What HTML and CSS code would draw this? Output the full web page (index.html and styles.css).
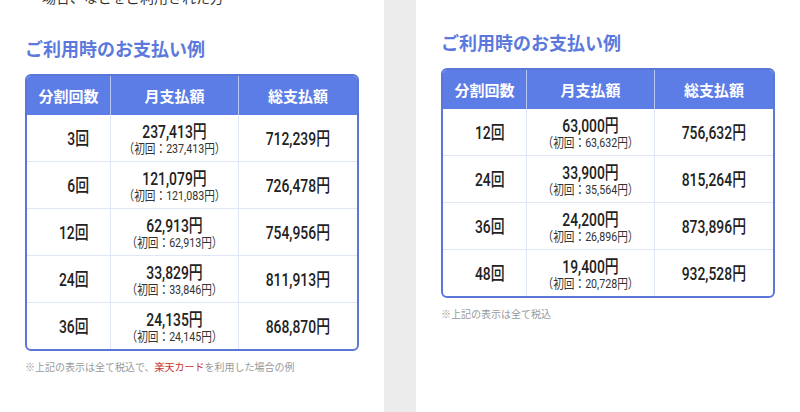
FILE: index.html
```html
<!DOCTYPE html>
<html lang="ja">
<head>
<meta charset="utf-8">
<link rel="stylesheet" href="styles.css">
</head>
<body>
<div class="page">
  <section class="panel panel-left">
    <p class="lead">場合、などをご利用された方</p>
    <h2 class="title">ご利用時のお支払い例</h2>
    <table class="pay">
      <thead>
        <tr><th>分割回数</th><th>月支払額</th><th>総支払額</th></tr>
      </thead>
      <tbody>
        <tr><td class="cnt"><span class="big r">3回</span></td><td class="mon"><span class="big">237,413円</span><span class="sub">（初回：237,413円）</span></td><td class="tot"><span class="big">712,239円</span></td></tr>
        <tr><td class="cnt"><span class="big r">6回</span></td><td class="mon"><span class="big">121,079円</span><span class="sub">（初回：121,083円）</span></td><td class="tot"><span class="big">726,478円</span></td></tr>
        <tr><td class="cnt"><span class="big r">12回</span></td><td class="mon"><span class="big">62,913円</span><span class="sub">（初回：62,913円）</span></td><td class="tot"><span class="big">754,956円</span></td></tr>
        <tr><td class="cnt"><span class="big r">24回</span></td><td class="mon"><span class="big">33,829円</span><span class="sub">（初回：33,846円）</span></td><td class="tot"><span class="big">811,913円</span></td></tr>
        <tr><td class="cnt"><span class="big r">36回</span></td><td class="mon"><span class="big">24,135円</span><span class="sub">（初回：24,145円）</span></td><td class="tot"><span class="big">868,870円</span></td></tr>
      </tbody>
    </table>
    <p class="note">※上記の表示は全て税込で、<span class="red">楽天カード</span>を利用した場合の例</p>
  </section>
  <div class="gutter"></div>
  <section class="panel panel-right">
    <h2 class="title">ご利用時のお支払い例</h2>
    <table class="pay">
      <thead>
        <tr><th>分割回数</th><th>月支払額</th><th>総支払額</th></tr>
      </thead>
      <tbody>
        <tr><td class="cnt"><span class="big r">12回</span></td><td class="mon"><span class="big">63,000円</span><span class="sub">（初回：63,632円）</span></td><td class="tot"><span class="big">756,632円</span></td></tr>
        <tr><td class="cnt"><span class="big r">24回</span></td><td class="mon"><span class="big">33,900円</span><span class="sub">（初回：35,564円）</span></td><td class="tot"><span class="big">815,264円</span></td></tr>
        <tr><td class="cnt"><span class="big r">36回</span></td><td class="mon"><span class="big">24,200円</span><span class="sub">（初回：26,896円）</span></td><td class="tot"><span class="big">873,896円</span></td></tr>
        <tr><td class="cnt"><span class="big r">48回</span></td><td class="mon"><span class="big">19,400円</span><span class="sub">（初回：20,728円）</span></td><td class="tot"><span class="big">932,528円</span></td></tr>
      </tbody>
    </table>
    <p class="note">※上記の表示は全て税込</p>
  </section>
</div>
</body>
</html>
```
FILE: styles.css
```css
html, body {
  margin: 0;
  padding: 0;
  background: #ffffff;
}
body {
  font-family: "Noto Sans CJK JP", "Noto Sans", sans-serif;
  color: #222;
}
.page {
  display: flex;
  width: 800px;
  height: 412px;
  overflow: hidden;
}
.panel {
  width: 384px;
  flex: 0 0 384px;
  box-sizing: border-box;
  padding: 0 25px;
  background: #fff;
}
.panel-right {
  padding-top: 30px;
}
.gutter {
  flex: 0 0 32px;
  background: #ececec;
}
.lead {
  margin: -13px 0 29px 17px;
  font-size: 14px;
  line-height: 20px;
  color: #333;
}
.title {
  margin: 0 0 14px 0;
  font-size: 18px;
  line-height: 24px;
  font-weight: 700;
  color: #5b79dd;
}
.pay {
  width: 334px;
  table-layout: fixed;
  border-collapse: separate;
  border-spacing: 0;
  border: 2px solid #5a77d8;
  border-radius: 6px;
  overflow: hidden;
}
.pay th:nth-child(1), .pay td:nth-child(1) { width: 83px; }
.pay th:nth-child(2), .pay td:nth-child(2) { width: 127px; }
.pay th {
  height: 39px;
  padding: 0;
  background: #5c7ce6;
  color: #fff;
  font-size: 15px;
  font-weight: 700;
  text-align: center;
  border-right: 1px solid #b9c7f3;
}
.pay th:last-child, .pay td:last-child { border-right: none; }
.pay td {
  height: 46px;
  padding: 0;
  border-right: 1px solid #dfe6f7;
  border-bottom: 1px solid #dfe6f7;
  text-align: center;
  vertical-align: middle;
}
.pay tbody tr:last-child td { border-bottom: none; }
.pay td.cnt {
  text-align: right;
  padding-right: 21px;
}
.big {
  display: inline-block;
  font-family: Roboto, "Noto Sans CJK JP", sans-serif;
  font-weight: 500;
  font-size: 18.5px;
  line-height: 18px;
  color: #222;
  transform: scaleX(0.75);
}
.big.r {
  transform-origin: right center;
}
.mon .big {
  display: block;
  margin-top: 1px;
}
.sub {
  display: block;
  font-family: Roboto, "Noto Sans CJK JP", sans-serif;
  font-size: 13px;
  line-height: 13px;
  color: #333;
  transform: scaleX(0.82);
  margin-top: 1px;
}
.note {
  margin: 8px 0 0 0;
  font-size: 10px;
  line-height: 16px;
  color: #999;
}
.red {
  color: #c9302c;
}
```
